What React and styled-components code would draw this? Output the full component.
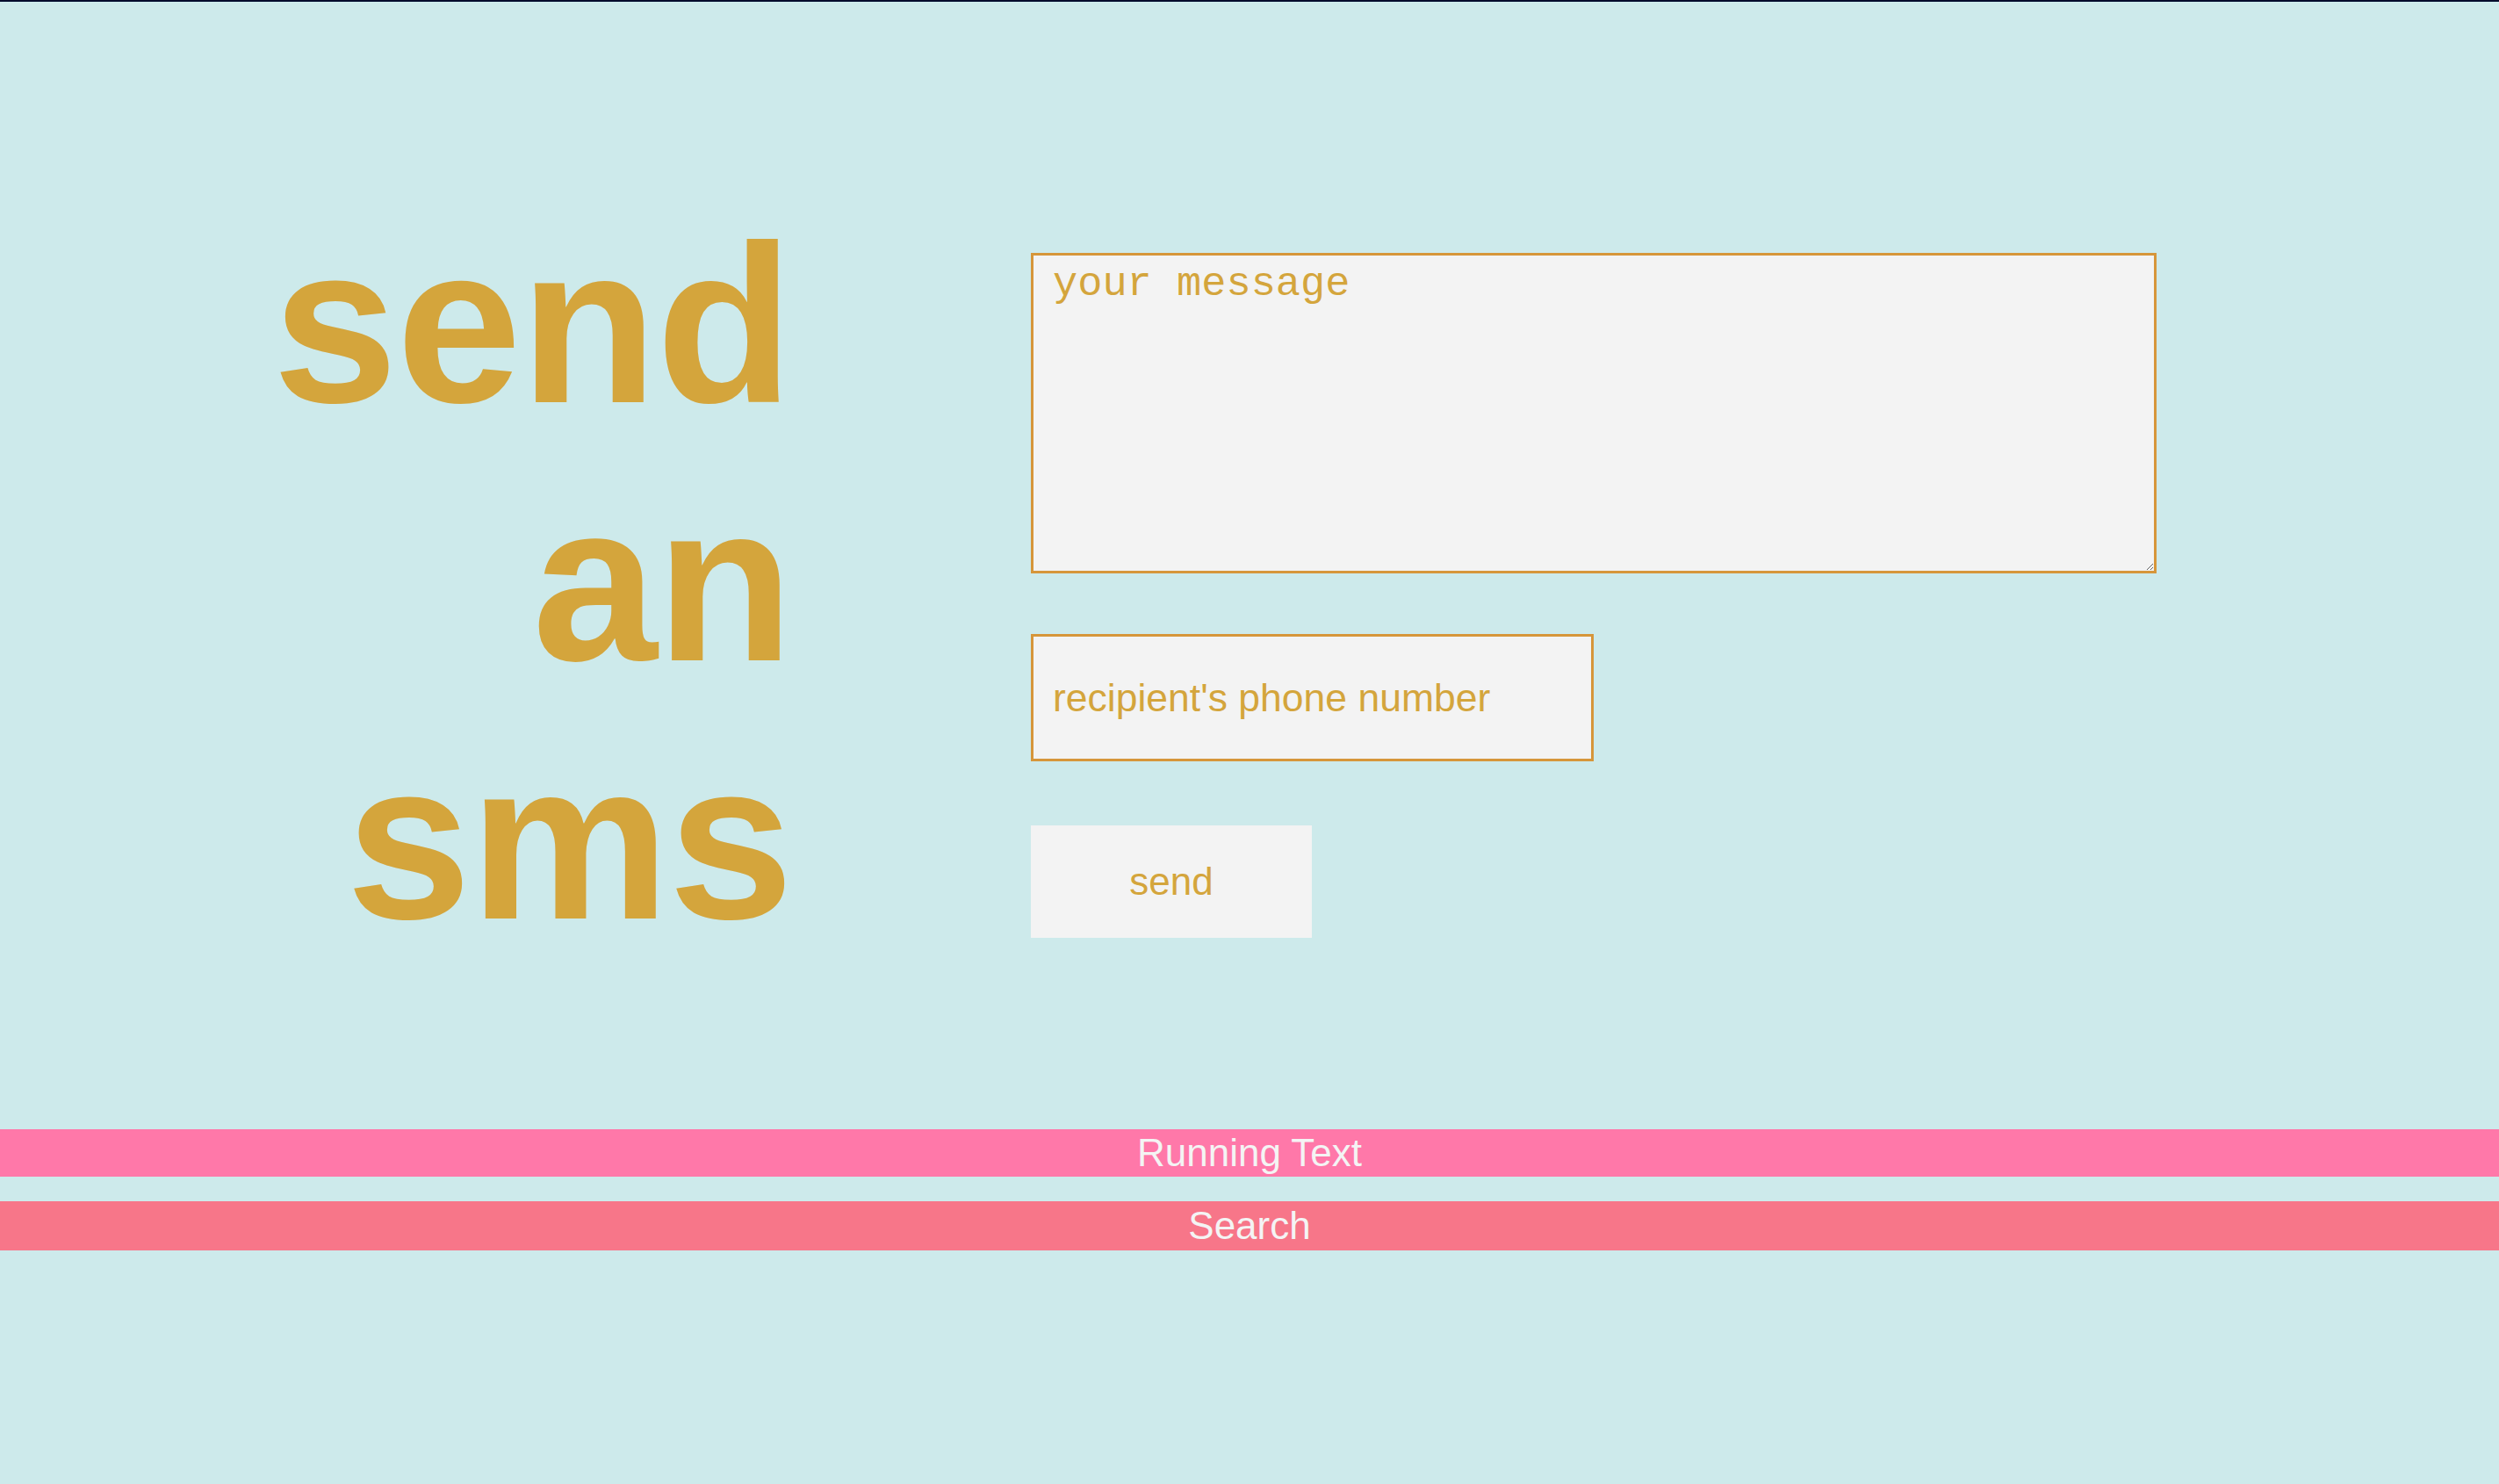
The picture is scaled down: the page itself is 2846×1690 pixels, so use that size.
import React from 'react';
import styled, {createGlobalStyle} from 'styled-components';

const GOLD = '#d4a53c';
const EDGE = '#d6963a';
const FIELD = '#f3f3f3';

const GlobalStyle = createGlobalStyle`
  html, body {
    margin: 0;
    padding: 0;
    background: #cdeaeb;
  }
  body {
    font-family: "Liberation Sans", Arial, sans-serif;
  }
  * {
    box-sizing: border-box;
  }
`;

const Page = styled.div`
  min-height: 100vh;
  border-top: 2px solid #000b2c;
  background: #cdeaeb;
  padding-top: 220px;
`;

const Main = styled.main`
  display: flex;
  align-items: flex-start;
`;

const Title = styled.h1`
  width: 902px;
  margin: 0;
  font-family: "Liberation Sans", Arial, sans-serif;
  font-weight: 700;
  font-size: 256px;
  line-height: 294px;
  letter-spacing: -1.5px;
  text-align: right;
  color: ${GOLD};
`;

const Form = styled.form`
  display: flex;
  flex-direction: column;
  align-items: flex-start;
  margin: 66px 0 0 272px;
`;

const Message = styled.textarea`
  display: block;
  width: 1282px;
  height: 365px;
  margin: 0;
  padding: 6px 22px;
  border: 3px solid ${EDGE};
  border-radius: 0;
  background: ${FIELD};
  font-family: "Liberation Mono", "Courier New", monospace;
  font-size: 47px;
  color: ${GOLD};
  outline: none;
  &::placeholder {
    color: ${GOLD};
    opacity: 1;
  }
`;

const Phone = styled.input`
  display: block;
  width: 641px;
  height: 145px;
  margin: 69px 0 0;
  padding: 0 22px;
  border: 3px solid ${EDGE};
  border-radius: 0;
  background: ${FIELD};
  font-family: "Liberation Sans", Arial, sans-serif;
  font-size: 44.5px;
  color: ${GOLD};
  outline: none;
  &::placeholder {
    color: ${GOLD};
    opacity: 1;
  }
`;

const SendButton = styled.button`
  display: block;
  width: 320px;
  height: 128px;
  margin: 73px 0 0;
  padding: 0;
  border: none;
  border-radius: 0;
  background: ${FIELD};
  font-family: "Liberation Sans", Arial, sans-serif;
  font-size: 44px;
  color: ${GOLD};
  cursor: pointer;
`;

const Bars = styled.div`
  display: flex;
  flex-direction: column;
  gap: 28px;
  margin-top: 182px;
`;

const Bar = styled.div`
  display: flex;
  align-items: center;
  justify-content: center;
  width: 100%;
  height: ${p => p.$h}px;
  background: ${p => p.$bg};
  font-family: "Liberation Sans", Arial, sans-serif;
  font-size: 44px;
  color: #f4f4f4;
`;

export default function App() {
  return (
    <Page>
      <GlobalStyle />
      <Main>
        <Title>
          send<br />an<br />sms
        </Title>
        <Form onSubmit={e => e.preventDefault()}>
          <Message placeholder="your message" />
          <Phone type="tel" placeholder="recipient's phone number" />
          <SendButton type="submit">send</SendButton>
        </Form>
      </Main>
      <Bars>
        <Bar $h={54} $bg="#ff78a9">Running Text</Bar>
        <Bar $h={56} $bg="#f77689">Search</Bar>
      </Bars>
    </Page>
  );
}
